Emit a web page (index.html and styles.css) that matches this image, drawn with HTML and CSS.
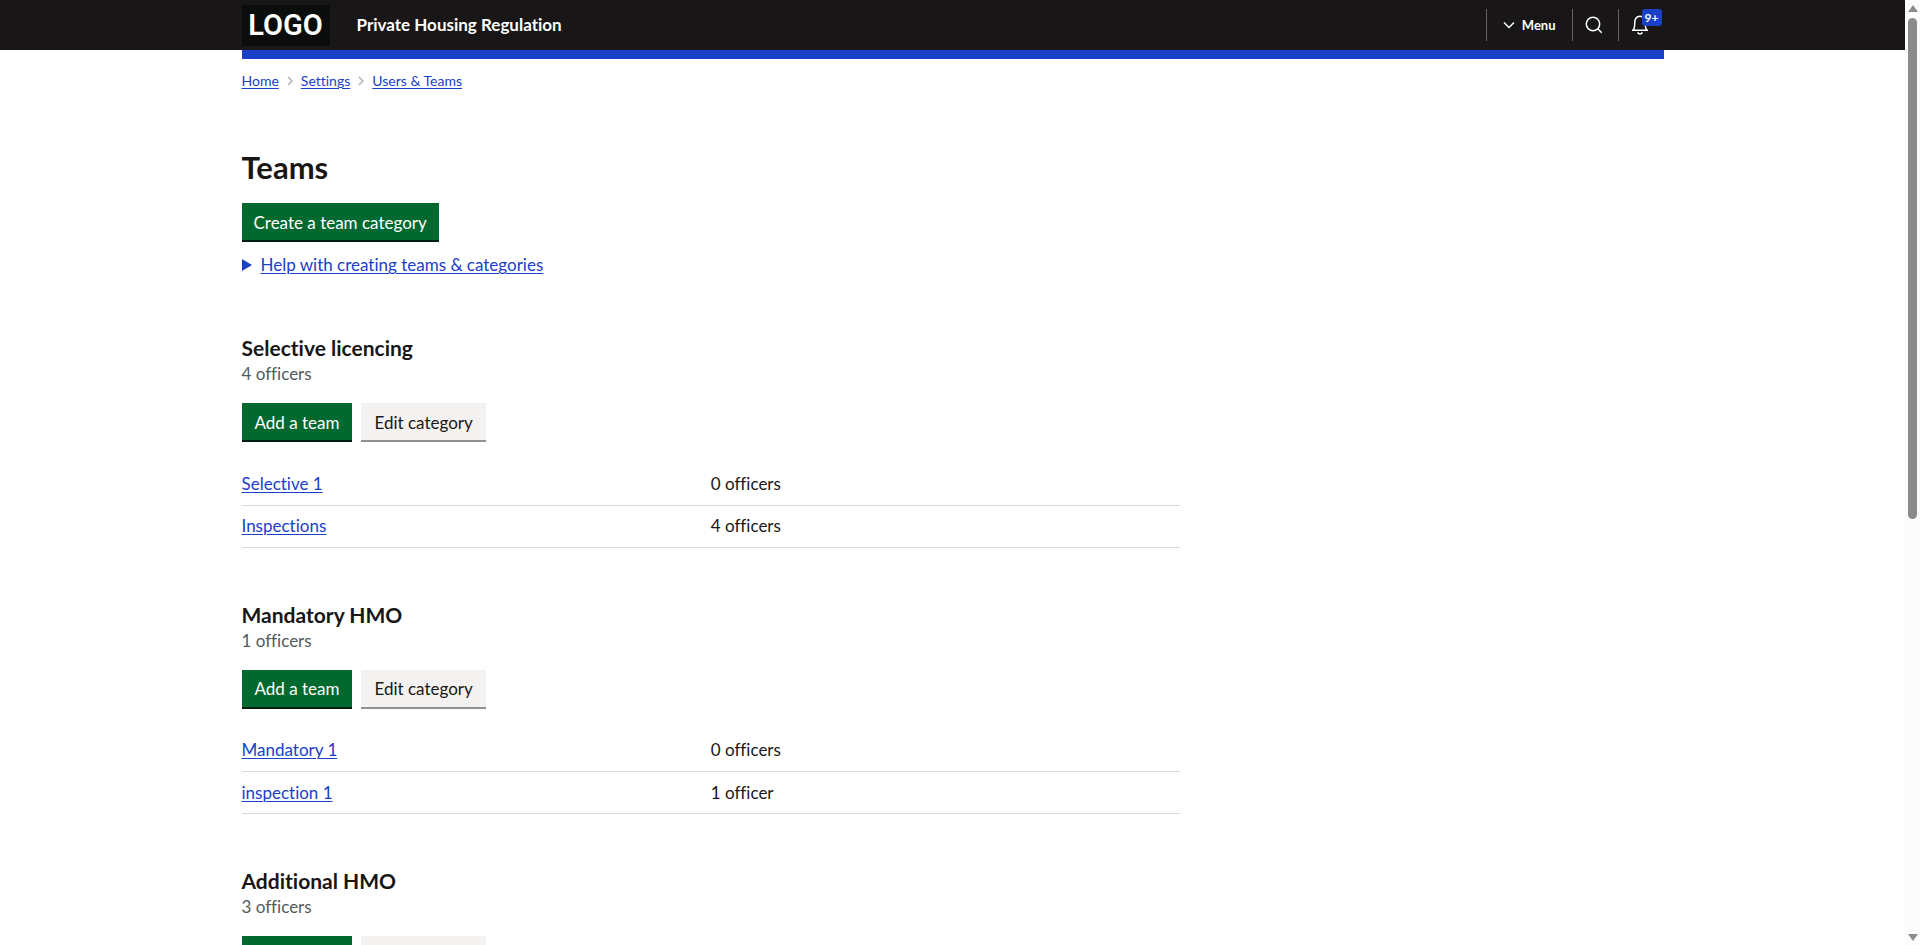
FILE: index.html
```
<!DOCTYPE html>
<html lang="en">
<head>
<meta charset="utf-8">
<meta name="viewport" content="width=device-width, initial-scale=1">
<title>Teams - Private Housing Regulation</title>
<link rel="stylesheet" href="styles.css">
</head>
<body>
<header class="header">
  <div class="container header-inner">
    <a class="logo" href="#">LOGO</a>
    <a class="service" href="#">Private Housing Regulation</a>
    <nav class="tools" aria-label="Tools">
      <button class="tool tool-menu" type="button">
        <svg width="12" height="8" viewBox="0 0 12 8" aria-hidden="true"><path d="M1 1.5l5 5 5-5"/></svg>
        Menu
      </button>
      <button class="tool tool-search" type="button" aria-label="Search">
        <svg width="18" height="18" viewBox="0 0 18 18" aria-hidden="true"><circle cx="8" cy="8" r="6.7"/><path d="M12.7 12.7l4 4"/></svg>
      </button>
      <button class="tool tool-alerts" type="button" aria-label="Notifications">
        <svg width="18" height="20" viewBox="0 0 18 20" aria-hidden="true"><path d="M1 15.3h16M2 15.2C3.3 14 3.7 12 3.7 8.2 3.7 4 5.600 1.200 9 1.200s5.300 2.800 5.300 7c0 3.800.4 5.800 1.700 7M6.600 17.400c.5 1.100 1.300 1.700 2.400 1.700s1.900-.6 2.400-1.700"/></svg>
        <span class="badge">9+</span>
      </button>
    </nav>
  </div>
</header>
<div class="container">
  <div class="bar"></div>
  <nav class="crumbs" aria-label="Breadcrumb">
    <a href="#">Home</a>
    <svg width="6" height="10" viewBox="0 0 6 10" aria-hidden="true"><path d="M1 1l4 4-4 4"/></svg>
    <a href="#">Settings</a>
    <svg width="6" height="10" viewBox="0 0 6 10" aria-hidden="true"><path d="M1 1l4 4-4 4"/></svg>
    <a href="#">Users &amp; Teams</a>
  </nav>
  <main class="main">
    <h1>Teams</h1>
    <button class="button" type="button">Create a team category</button>
    <details class="help">
      <summary><svg width="10" height="12" viewBox="0 0 10 12" aria-hidden="true"><path d="M0 0l10 6-10 6z"/></svg><span>Help with creating teams &amp; categories</span></summary>
    </details>

    <section class="category">
      <h2>Selective licencing</h2>
      <p class="count">4 officers</p>
      <div class="actions">
        <button class="button" type="button">Add a team</button>
        <button class="button secondary" type="button">Edit category</button>
      </div>
      <table class="teams">
        <tr><td><a href="#">Selective 1</a></td><td>0 officers</td></tr>
        <tr><td><a href="#">Inspections</a></td><td>4 officers</td></tr>
      </table>
    </section>

    <section class="category">
      <h2>Mandatory HMO</h2>
      <p class="count">1 officers</p>
      <div class="actions">
        <button class="button" type="button">Add a team</button>
        <button class="button secondary" type="button">Edit category</button>
      </div>
      <table class="teams">
        <tr><td><a href="#">Mandatory 1</a></td><td>0 officers</td></tr>
        <tr><td><a href="#">inspection 1</a></td><td>1 officer</td></tr>
      </table>
    </section>

    <section class="category">
      <h2>Additional HMO</h2>
      <p class="count">3 officers</p>
      <div class="actions">
        <button class="button" type="button">Add a team</button>
        <button class="button secondary" type="button">Edit category</button>
      </div>
    </section>
  </main>
</div>
<div class="scrollbar" aria-hidden="true">
  <svg width="10" height="7" viewBox="0 0 10 7"><path d="M5 0l5 7H0z"/></svg>
  <div class="track"><div class="thumb"></div></div>
  <svg width="10" height="7" viewBox="0 0 10 7"><path d="M5 7L0 0h10z"/></svg>
</div>
</body>
</html>
```
FILE: styles.css
```
* { box-sizing: border-box; }

html { height: 100%; overflow: hidden; }

body {
  height: 100%;
  margin: 0;
  padding-right: 15px;
  overflow: hidden;
  background: #fff;
  color: #191617;
  font: 17px/24px Lato, "Open Sans", sans-serif;
  font-variant-ligatures: none;
}

button { font: inherit; font-variant-ligatures: none; cursor: pointer; }

a { color: #1a40c7; text-decoration-thickness: 1px; text-underline-offset: 2px; }

.container { max-width: 1422px; margin: 0 auto; }

/* Header */
.header { background: #191617; }
.header-inner { display: flex; align-items: center; height: 50px; }

.logo {
  display: flex;
  align-items: center;
  justify-content: center;
  width: 88px;
  height: 41px;
  background: #0b0c0c;
  color: #fff;
  font: 600 29px/40px Roboto, sans-serif;
  text-decoration: none;
}

.service {
  margin-left: 27px;
  color: #fff;
  font-weight: 700;
  text-decoration: none;
}

.tools { display: flex; margin-left: auto; }
.tool {
  display: flex;
  align-items: center;
  height: 32px;
  padding: 0;
  border: 0;
  border-left: 1px solid #666364;
  background: none;
  color: #fff;
}
.tool svg { fill: none; stroke: #fff; stroke-width: 1.5; }
.tool-menu { gap: 7px; padding: 0 16px; font-size: 13px; font-weight: 700; }
.tool-search { width: 46px; padding-left: 12px; }
.tool-alerts { position: relative; width: 46px; padding-left: 12px; }

.badge {
  position: absolute;
  top: 0;
  right: 2px;
  width: 20px;
  height: 17px;
  border-radius: 3px;
  background: #1a40c7;
  font-size: 12px;
  font-weight: 700;
  line-height: 17px;
}

.bar { height: 9px; background: #1a40c7; }

.crumbs {
  display: flex;
  align-items: center;
  gap: 8px;
  margin-top: 12px;
  font-size: 14px;
  line-height: 20px;
}
.crumbs svg { fill: none; stroke: #b1b4b6; stroke-width: 1.5; }

/* Content */
.main { padding-top: 56px; }

h1 { margin: 0 0 16px; font-size: 31px; line-height: 40px; }
h2 { margin: 0; font-size: 21px; line-height: 28px; }

.button {
  height: 39px;
  padding: 2px 12px 0;
  border: 0;
  border-bottom: 2px solid #001e0f;
  background: #00692f;
  color: #fff;
}
.actions .button { padding: 2px 13px 0; }
.secondary { border-bottom-color: #929191; background: #f3f2f1; color: #191617; }

.help { margin-top: 11px; }
.help summary {
  display: flex;
  align-items: center;
  gap: 9px;
  width: fit-content;
  color: #1a40c7;
  cursor: pointer;
}
.help summary svg { fill: #1a40c7; }
.help summary span {
  text-decoration: underline;
  text-decoration-thickness: 1px;
  text-underline-offset: 2px;
}

.category { margin-top: 53px; }
.help + .category { margin-top: 57px; }

.count { margin: 0; line-height: 24px; color: #505a5f; }

.actions { display: flex; gap: 9px; margin-top: 17px; }

.teams {
  width: 66%;
  margin-top: 21px;
  border-collapse: collapse;
  table-layout: fixed;
}
.teams td { height: 42px; padding: 0; border-bottom: 1px solid #d9dadb; }

/* Scrollbar */
.scrollbar {
  position: fixed;
  top: 0;
  right: 0;
  bottom: 0;
  display: flex;
  flex-direction: column;
  align-items: center;
  gap: 6px;
  width: 15px;
  padding: 5px 0 4px;
  background: #fcfcfc;
}
.scrollbar svg { fill: #8b8b8b; }
.track { flex: 1; }
.thumb { width: 9px; height: 55%; border-radius: 5px; background: #8b8b8b; }
```
